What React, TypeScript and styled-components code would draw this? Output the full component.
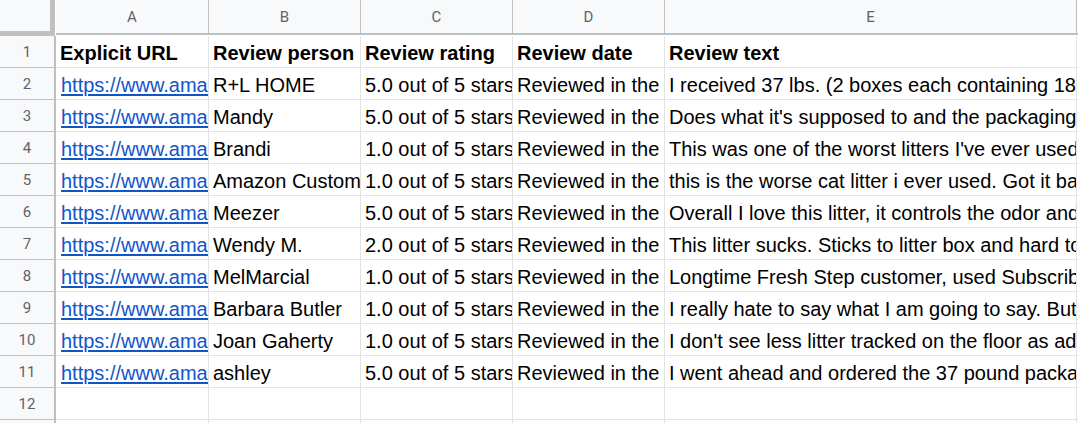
import React from 'react';
import styled, { createGlobalStyle } from 'styled-components';

type ReviewRow = {
  url: string;
  person: string;
  rating: string;
  date: string;
  text: string;
};

const rows: ReviewRow[] = [
  { url: 'https://www.amazon.com/', person: 'R+L HOME', rating: '5.0 out of 5 stars', date: 'Reviewed in the United States', text: 'I received 37 lbs. (2 boxes each containing 18.5 lbs.)' },
  { url: 'https://www.amazon.com/', person: 'Mandy', rating: '5.0 out of 5 stars', date: 'Reviewed in the United States', text: "Does what it's supposed to and the packaging is great" },
  { url: 'https://www.amazon.com/', person: 'Brandi', rating: '1.0 out of 5 stars', date: 'Reviewed in the United States', text: "This was one of the worst litters I've ever used." },
  { url: 'https://www.amazon.com/', person: 'Amazon Customer', rating: '1.0 out of 5 stars', date: 'Reviewed in the United States', text: 'this is the worse cat litter i ever used. Got it based on reviews' },
  { url: 'https://www.amazon.com/', person: 'Meezer', rating: '5.0 out of 5 stars', date: 'Reviewed in the United States', text: 'Overall I love this litter, it controls the odor and clumps well' },
  { url: 'https://www.amazon.com/', person: 'Wendy M.', rating: '2.0 out of 5 stars', date: 'Reviewed in the United States', text: 'This litter sucks. Sticks to litter box and hard to clean' },
  { url: 'https://www.amazon.com/', person: 'MelMarcial', rating: '1.0 out of 5 stars', date: 'Reviewed in the United States', text: 'Longtime Fresh Step customer, used Subscribe and Save' },
  { url: 'https://www.amazon.com/', person: 'Barbara Butler', rating: '1.0 out of 5 stars', date: 'Reviewed in the United States', text: 'I really hate to say what I am going to say. But this litter' },
  { url: 'https://www.amazon.com/', person: 'Joan Gaherty', rating: '1.0 out of 5 stars', date: 'Reviewed in the United States', text: "I don't see less litter tracked on the floor as advertised" },
  { url: 'https://www.amazon.com/', person: 'ashley', rating: '5.0 out of 5 stars', date: 'Reviewed in the United States', text: 'I went ahead and ordered the 37 pound package and it' },
];

const letters = ['A', 'B', 'C', 'D', 'E', ''];

const GlobalStyle = createGlobalStyle`
  html, body {
    margin: 0;
    padding: 0;
    background: #ffffff;
    overflow: hidden;
  }
`;

const Sheet = styled.div`
  display: grid;
  grid-template-columns: 56px 153px 152px 152px 152px 412px 1fr;
  grid-auto-rows: 32px;
  grid-template-rows: 36px;
  width: 1078px;
  height: 423px;
  overflow: hidden;
`;

const Corner = styled.div`
  background: #f8f9fa;
  border-right: 5px solid #c0c0c0;
  border-bottom: 5px solid #c0c0c0;
  box-sizing: border-box;
  width: 55px;
`;

const ColHeader = styled.div`
  background: #f8f9fa;
  border-right: 1px solid #c0c0c0;
  border-bottom: 2px solid #c0c0c0;
  margin-bottom: 1px;
  box-sizing: border-box;
  display: flex;
  align-items: center;
  justify-content: center;
  font-family: Roboto, 'Liberation Sans', sans-serif;
  font-size: 15px;
  color: #5f6368;
`;

const RowHeader = styled.div`
  background: #f8f9fa;
  border-right: 2px solid #c0c0c0;
  border-bottom: 1px solid #c0c0c0;
  box-sizing: border-box;
  display: flex;
  align-items: center;
  justify-content: center;
  font-family: Roboto, 'Liberation Sans', sans-serif;
  font-size: 15px;
  color: #5f6368;
`;

const Cell = styled.div<{ $bold?: boolean; $link?: boolean }>`
  border-right: 1px solid #e2e3e3;
  border-bottom: 1px solid #e2e3e3;
  box-sizing: border-box;
  display: flex;
  align-items: flex-end;
  padding: 0 4px 2px ${(p) => (p.$link ? '5px' : '4px')};
  overflow: hidden;
  white-space: nowrap;
  font-family: 'Liberation Sans', Arial, sans-serif;
  font-size: 20px;
  line-height: 24px;
  font-weight: ${(p) => (p.$bold ? 700 : 400)};
  color: ${(p) => (p.$link ? '#1155cc' : '#000000')};
  text-decoration: ${(p) => (p.$link ? 'underline' : 'none')};
  text-underline-offset: 2px;
`;

const App = () => {
  return (
    <>
      <GlobalStyle />
      <Sheet>
        <Corner />
        {letters.map((l, i) => (
          <ColHeader key={'h' + i}>{l}</ColHeader>
        ))}

        <RowHeader>1</RowHeader>
        <Cell $bold>Explicit URL</Cell>
        <Cell $bold>Review person</Cell>
        <Cell $bold>Review rating</Cell>
        <Cell $bold>Review date</Cell>
        <Cell $bold>Review text</Cell>
        <Cell />

        {rows.map((r, i) => (
          <React.Fragment key={i}>
            <RowHeader>{i + 2}</RowHeader>
            <Cell $link>{r.url}</Cell>
            <Cell>{r.person}</Cell>
            <Cell>{r.rating}</Cell>
            <Cell>{r.date}</Cell>
            <Cell>{r.text}</Cell>
            <Cell />
          </React.Fragment>
        ))}

        <RowHeader>12</RowHeader>
        <Cell />
        <Cell />
        <Cell />
        <Cell />
        <Cell />
        <Cell />

        <RowHeader>13</RowHeader>
        <Cell />
        <Cell />
        <Cell />
        <Cell />
        <Cell />
        <Cell />
      </Sheet>
    </>
  );
};

export default App;
